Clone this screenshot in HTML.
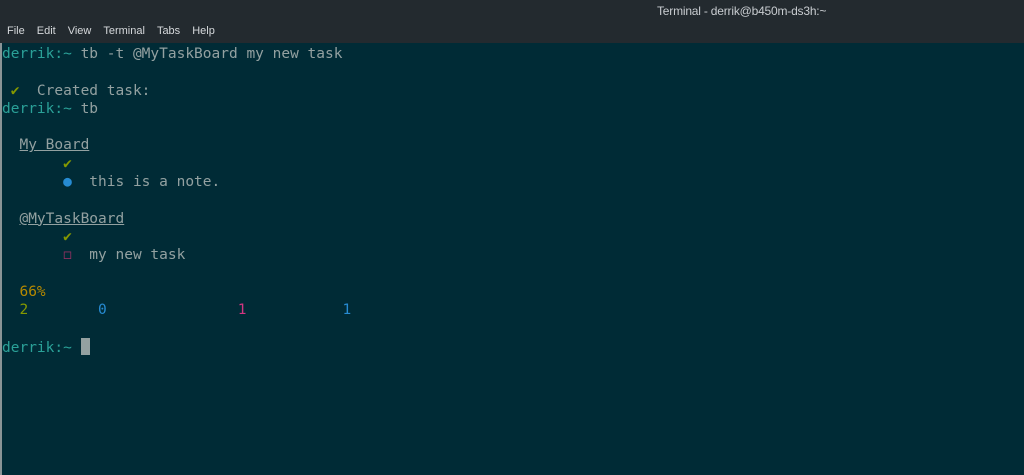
<!DOCTYPE html>
<html><head><meta charset="utf-8"><style>
html,body{margin:0;padding:0;}
body{width:1024px;height:475px;background:#002b36;position:relative;overflow:hidden;}
.top{position:absolute;left:0;top:0;width:1024px;height:43px;background:#232a2f;}
.title{position:absolute;left:657px;top:4px;font:12px "Liberation Sans",sans-serif;color:#c8ccd0;letter-spacing:-0.2px;}
.menu{position:absolute;left:7px;top:25px;font:11px "Liberation Sans",sans-serif;color:#d5d8db;word-spacing:0;}
.menu span{margin-right:12px;}
.lb{position:absolute;left:0;top:43px;width:2px;height:432px;background:#8a9496;}
pre{position:absolute;left:2px;top:45px;margin:0;font:14.5px/18.3px "DejaVu Sans Mono","Liberation Mono",monospace;color:#93a1a1;}
.p{color:#2aa198}.g{color:#859900}.b{color:#268bd2}.m{color:#d33682}.y{color:#b58900}.u{text-decoration:underline;}
.pk{color:#8f3060}
.cur{display:inline-block;width:9px;height:17px;background:#93a1a1;vertical-align:-3px;}
</style></head><body>
<div class="top"></div>
<div class="title">Terminal - derrik@b450m-ds3h:~</div>
<div class="menu"><span>File</span><span>Edit</span><span>View</span><span>Terminal</span><span>Tabs</span><span>Help</span></div>
<div class="lb"></div>
<pre><span class="p">derrik:~</span> tb -t @MyTaskBoard my new task

 <span class="g">✔</span>  Created task:
<span class="p">derrik:~</span> tb

  <span class="u">My Board</span>
       <span class="g">✔</span>
       <span class="b">●</span>  this is a note.

  <span class="u">@MyTaskBoard</span>
       <span class="g">✔</span>
       <span class="pk">◻</span>  my new task

  <span class="y">66%</span>
  <span class="g">2</span>        <span class="b">0</span>               <span class="m">1</span>           <span class="b">1</span>

<span class="p">derrik:~</span> <span class="cur"></span></pre>
</body></html>
